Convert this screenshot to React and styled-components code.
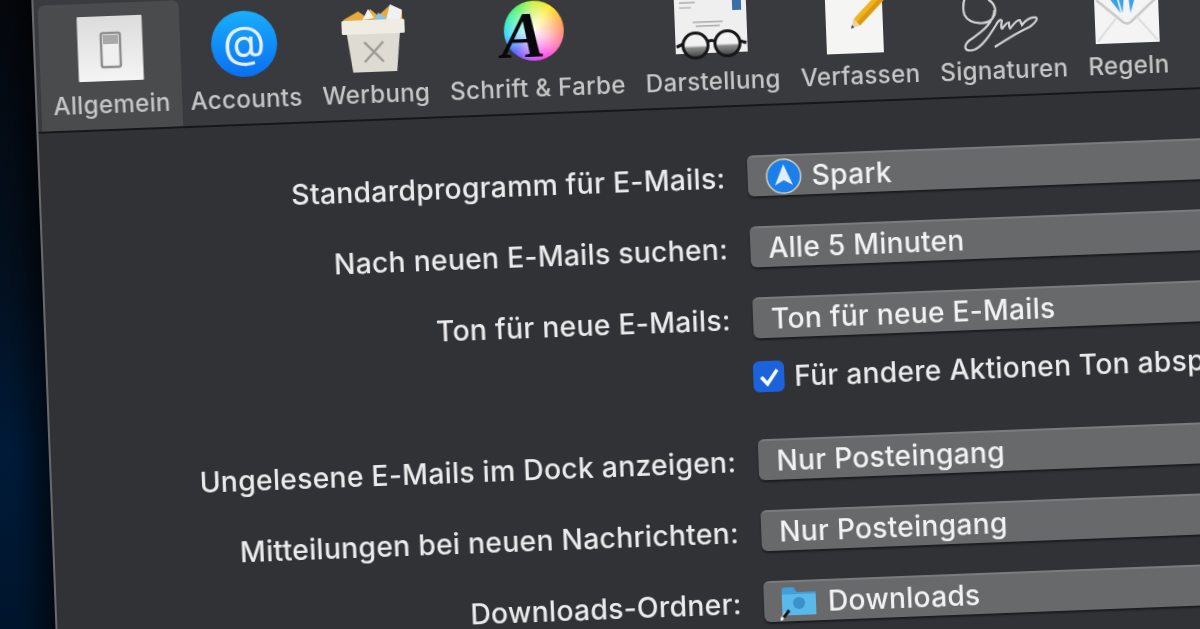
import React from 'react';
import styled, { createGlobalStyle } from 'styled-components';

const Global = createGlobalStyle`
  html, body { margin: 0; padding: 0; background: #02101f; }
  body { font-family: Inter, "Liberation Sans", sans-serif; }
`;

const Stage = styled.div`
  width: 1200px;
  height: 629px;
  overflow: hidden;
  background: linear-gradient(180deg, #04070d 0%, #03101f 45%, #001a38 72%, #00152c 100%);
`;

// the whole window is photographed slightly turned
const Window = styled.div`
  width: 1400px;
  height: 900px;
  transform-origin: 0 0;
  transform: translate(30px, -34px) rotate(-2.2deg);
  background: #313236;
  border-left: 2px solid #6a6a6c;
  box-shadow: -14px 0 26px rgba(0, 0, 0, 0.65);
  filter: blur(0.45px);
`;

const TitleBar = styled.div`
  height: 40px;
  background: #3a3b3e;
`;

const Toolbar = styled.div`
  display: flex;
  height: 128px;
  padding-left: 4px;
  background: #393a3d;
  border-bottom: 2px solid #17171a;
  box-sizing: border-box;
`;

const Tab = styled.div`
  display: flex;
  flex-direction: column;
  align-items: center;
  padding: 11px ${(p) => (p.$active ? '12px' : '10px')} 0;
  margin-right: ${(p) => (p.$active ? '-2px' : '0')};
  background: ${(p) => (p.$active ? '#4a4b4d' : 'transparent')};
  border-radius: 6px 6px 0 0;
`;

const TabIcon = styled.div`
  height: 70px;
  display: flex;
  justify-content: center;

  svg {
    overflow: visible;
  }
`;

const TabLabel = styled.div`
  margin-top: 6px;
  font-size: 24.15px;
  font-weight: 500;
  line-height: 30px;
  letter-spacing: 0.3px;
  color: #c6c6c6;
  white-space: nowrap;
`;

const Wheel = styled.div`
  position: relative;
  width: 60px;
  height: 60px;
  margin: 3px 0 0 -4px;
  border-radius: 50%;
  background: radial-gradient(circle, rgba(255, 255, 255, 0.95) 0%, rgba(255, 255, 255, 0.55) 35%, rgba(255, 255, 255, 0) 72%),
    conic-gradient(#c8f040, #ffe820 35deg, #ff9850 80deg, #ff70b0 125deg, #ff40f0 160deg, #b050ff 195deg, #5060ff 225deg, #30d0ff 260deg, #30f0b0 295deg, #60f060 330deg, #c8f040);
`;

const WheelLetter = styled.span`
  position: absolute;
  left: -3px;
  top: 1px;
  font-family: "Liberation Serif", serif;
  font-weight: 700;
  font-style: italic;
  font-size: 66px;
  line-height: 66px;
  color: #08080c;
`;

const Panel = styled.div`
  padding-top: 49px;
`;

const Row = styled.div`
  display: grid;
  grid-template-columns: 684.5px 680px;
  column-gap: 22.5px;
  height: 41px;
  margin-bottom: ${(p) => p.$after || 30}px;
`;

const Label = styled.div`
  text-align: right;
  font-size: 28.35px;
  font-weight: 500;
  line-height: 45.5px;
  height: 41px;
  letter-spacing: 0.25px;
  color: #ebebeb;
  white-space: nowrap;
`;

const Select = styled.div`
  display: flex;
  align-items: center;
  gap: 10px;
  height: 41px;
  box-sizing: border-box;
  padding: 1px 18px 0;
  border-radius: 6px;
  background: #68696b;
  border-top: 2px solid #7b7b7d;
  box-shadow: 0 2px 2px rgba(0, 0, 0, 0.45);
  font-size: 28.2px;
  font-weight: 500;
  letter-spacing: 0.25px;
  color: #f2f2f2;
`;

const CheckRow = styled.div`
  display: flex;
  align-items: center;
  gap: 10px;
  height: 31px;
  margin: 23px 0 47px 705px;
  font-size: 28.2px;
  font-weight: 500;
  letter-spacing: 0.25px;
  color: #ebebeb;
  white-space: nowrap;
`;

const CheckBox = styled.div`
  width: 31px;
  height: 31px;
  flex: none;
  border-radius: 6px;
  background: #1c63db;
  display: flex;
  align-items: center;
  justify-content: center;
`;

const FolderWrap = styled.div`
  margin-left: -2px;
  display: flex;
`;

const SwitchIcon = () => (
  <svg width="66" height="70" viewBox="0 0 66 70">
    <defs>
      <linearGradient id="sw" x1="0" y1="0" x2="0" y2="1">
        <stop offset="0" stopColor="#dcdcdc" />
        <stop offset="1" stopColor="#f4f4f4" />
      </linearGradient>
    </defs>
    <rect x="0.5" y="2" width="65" height="65" rx="1" fill="url(#sw)" />
    <rect x="24" y="19" width="19" height="34" rx="2" fill="#f0f0f0" stroke="#8e8e8e" strokeWidth="2.5" />
    <rect x="26" y="21" width="15" height="9" fill="#a8a8a8" />
  </svg>
);

const AtIcon = () => (
  <svg width="66" height="70" viewBox="0 0 66 70">
    <defs>
      <linearGradient id="at" x1="0" y1="0" x2="0" y2="1">
        <stop offset="0" stopColor="#19aefb" />
        <stop offset="1" stopColor="#0a6ff2" />
      </linearGradient>
    </defs>
    <circle cx="33" cy="35" r="33" fill="url(#at)" />
    <text x="33" y="49" textAnchor="middle" fontFamily="Inter, sans-serif" fontSize="44" fill="#e6eef8">@</text>
  </svg>
);

const TrashIcon = () => (
  <svg width="66" height="70" viewBox="0 0 66 70">
    <path d="M3 15 L18 7 L26 13 L30 5 L38 12 L50 2 L62 9 L62 20 L3 20Z" fill="#e9a93c" />
    <path d="M22 16 L28 5 L34 14Z" fill="#f3f3f3" />
    <path d="M34 17 L38 9 L46 14 L44 18Z" fill="#8cc4e8" />
    <path d="M46 16 L50 1 L62 7 L60 18Z" fill="#eef2f5" />
    <rect x="1" y="16" width="63" height="14" rx="1.5" fill="#efece4" />
    <path d="M6 30 L59 30 L55 68 L11 68Z" fill="#dedbd2" />
    <path d="M23 38 L42 58 M42 38 L23 58" stroke="#9c9a94" strokeWidth="2.5" fill="none" />
  </svg>
);

const FontIcon = () => (
  <Wheel>
    <WheelLetter>A</WheelLetter>
  </Wheel>
);

const ReadIcon = () => (
  <svg width="76" height="76" viewBox="0 0 76 76">
    <defs>
      <linearGradient id="lens" x1="0" y1="0" x2="0" y2="1">
        <stop offset="0.5" stopColor="#f2f2f2" />
        <stop offset="0.6" stopColor="#8a8a8a" />
        <stop offset="1" stopColor="#3a3b3e" />
      </linearGradient>
    </defs>
    <rect x="2" y="-8" width="72" height="70" fill="#efefef" />
    <rect x="60" y="8" width="9" height="12" fill="#3a6ea8" />
    <rect x="7" y="10" width="16" height="2" fill="#bbb" />
    <rect x="7" y="15" width="12" height="2" fill="#c6c6c6" />
    <rect x="20" y="30" width="30" height="1.5" fill="#aaa" />
    <rect x="23" y="34" width="24" height="1.5" fill="#aaa" />
    <circle cx="22" cy="54" r="12.5" fill="url(#lens)" stroke="#17171a" strokeWidth="3" />
    <circle cx="54" cy="53" r="12.5" fill="url(#lens)" stroke="#17171a" strokeWidth="3" />
    <path d="M34 51 Q38 48 42 51 M10 52 L3 55 M66 51 L73 53" stroke="#17171a" strokeWidth="3" fill="none" />
  </svg>
);

const ComposeIcon = () => (
  <svg width="62" height="70" viewBox="0 0 62 70">
    <rect x="-2" y="-10" width="57" height="78" fill="#f5f5f3" />
    <path d="M25.8 33.8 L56.8 2.8 L63.2 9.2 L32.2 40.2Z" fill="#f0b41e" />
    <path d="M29 37 L60 6 L63.2 9.2 L32.2 40.2Z" fill="#d99a12" />
    <path d="M23 43 L25.8 33.8 L32.2 40.2Z" fill="#e8d2a8" />
    <path d="M23 43 L24 39.5 L26.5 42Z" fill="#444" />
  </svg>
);

const SignatureIcon = () => (
  <svg width="78" height="70" viewBox="0 0 78 70">
    <path
      d="M14 4 C2 8 -2 24 1 34 C6 44 24 45 29 38 C34 32 32 24 26 20 C22 12 18 6 14 4 M31 30 C30 42 20 50 4 60 C-2 66 0 71 9 69 C18 66 26 54 32 45 C34 41 37 39 38 41 C37 45 37 49 38 49 C41 45 43 43 45 43 C45 45 45 48 46 49 C50 45 52 41 56 41 L58 46 C62 41 66 38 72 39 C75 41 70 45 66 48 C54 53 40 61 30 67"
      fill="none"
      stroke="#d2d2d2"
      strokeWidth="2.2"
    />
  </svg>
);

const RulesIcon = () => (
  <svg width="64" height="70" viewBox="0 0 64 70">
    <rect x="0" y="-8" width="64" height="76" fill="#f4f4f4" />
    <path d="M2 24 L28 47 Q32 50 36 47 L62 24" fill="none" stroke="#c9c9c9" strokeWidth="2.5" />
    <path d="M2 66 L22 42 M62 66 L42 42" fill="none" stroke="#dedede" strokeWidth="2" />
    <path d="M24 22 L28 38 L30 20Z M34 20 L36 38 L41 22Z M16 24 L26 38 L22 20Z" fill="#3aa0e8" />
  </svg>
);

const SparkIcon = () => (
  <svg width="36" height="36" viewBox="0 0 36 36">
    <circle cx="18" cy="18" r="17" fill="#1a7fe8" stroke="#d6cbb8" strokeWidth="1.5" />
    <path d="M18 6 L27 27 L18 22 L9 27Z" fill="#e4eefa" />
  </svg>
);

const FolderIcon = () => (
  <svg width="38" height="36" viewBox="0 0 38 36">
    <path d="M2 6 Q2 3 5 3 L14 3 L17 8 L36 8 L36 31 L2 31Z" fill="#3f9fd8" />
    <rect x="2" y="10" width="34" height="21" fill="#5ab8ea" />
    <circle cx="19" cy="19" r="6" fill="#3c92c8" />
    <path d="M0 36 L6 28" stroke="#f2f2f2" strokeWidth="3" />
    <path d="M3 33 L9 26" stroke="#111" strokeWidth="3" />
  </svg>
);

const tabs = [
  { name: 'Allgemein', Icon: SwitchIcon, active: true },
  { name: 'Accounts', Icon: AtIcon },
  { name: 'Werbung', Icon: TrashIcon },
  { name: 'Schrift & Farbe', Icon: FontIcon },
  { name: 'Darstellung', Icon: ReadIcon },
  { name: 'Verfassen', Icon: ComposeIcon },
  { name: 'Signaturen', Icon: SignatureIcon },
  { name: 'Regeln', Icon: RulesIcon },
];

export default function App() {
  return (
    <Stage>
      <Global />
      <Window>
        <TitleBar />
        <Toolbar>
          {tabs.map(({ name, Icon, active }) => (
            <Tab key={name} $active={active}>
              <TabIcon>
                <Icon />
              </TabIcon>
              <TabLabel>{name}</TabLabel>
            </Tab>
          ))}
        </Toolbar>
        <Panel>
          <Row>
            <Label>Standardprogramm für E-Mails:</Label>
            <Select>
              <SparkIcon />
              Spark
            </Select>
          </Row>
          <Row>
            <Label>Nach neuen E-Mails suchen:</Label>
            <Select>Alle 5 Minuten</Select>
          </Row>
          <Row $after={1}>
            <Label>Ton für neue E-Mails:</Label>
            <Select>Ton für neue E-Mails</Select>
          </Row>
          <CheckRow>
            <CheckBox>
              <svg width="22" height="20" viewBox="0 0 22 20">
                <path d="M3 10 L9 17 L19 3" fill="none" stroke="#fff" strokeWidth="3.5" />
              </svg>
            </CheckBox>
            Für andere Aktionen Ton abspielen
          </CheckRow>
          <Row>
            <Label>Ungelesene E-Mails im Dock anzeigen:</Label>
            <Select>Nur Posteingang</Select>
          </Row>
          <Row>
            <Label>Mitteilungen bei neuen Nachrichten:</Label>
            <Select>Nur Posteingang</Select>
          </Row>
          <Row>
            <Label>Downloads-Ordner:</Label>
            <Select>
              <FolderWrap>
                <FolderIcon />
              </FolderWrap>
              Downloads
            </Select>
          </Row>
        </Panel>
      </Window>
    </Stage>
  );
}
